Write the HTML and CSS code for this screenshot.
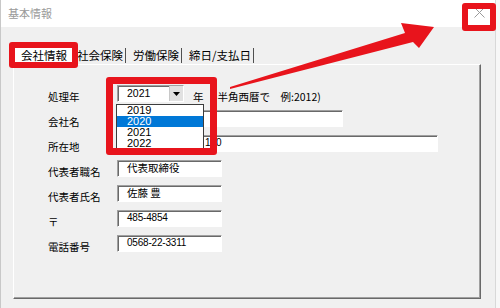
FILE: index.html
```html
<!DOCTYPE html>
<html lang="ja">
<head>
<meta charset="utf-8">
<link rel="stylesheet" href="styles.css">
</head>
<body>
<div class="window">
  <div class="titlebar">
    <span class="title">基本情報</span>
    <span class="close">
      <svg width="11" height="11" viewBox="0 0 11 11"><path d="M0.5 0.5L10.5 10.5M10.5 0.5L0.5 10.5" stroke="#9a9a9a" stroke-width="1" fill="none"/></svg>
    </span>
  </div>
  <div class="client">
    <div class="tabs">
      <div class="tab active">会社情報</div>
      <div class="tab first">社会保険</div>
      <div class="tab">労働保険</div>
      <div class="tab">締日/支払日</div>
    </div>
    <div class="panel">
      <div class="form">
        <div class="label">処理年</div>
        <div class="yearrow">
          <div class="combo">
            <span class="combo-val">2021</span>
            <span class="combo-btn"><svg width="7" height="4" viewBox="0 0 7 4"><path d="M0 0H7L3.5 4Z" fill="#000"/></svg></span>
          </div>
          <span class="nen">年</span>
          <span class="hint">半角西暦で　例:2012)</span>
        </div>
        <div class="label">会社名</div>
        <div class="field w-mid"></div>
        <div class="label">所在地</div>
        <div class="field w-long addr">100</div>
        <div class="label">代表者職名</div>
        <div class="field w-short">代表取締役</div>
        <div class="label">代表者氏名</div>
        <div class="field w-short">佐藤 豊</div>
        <div class="label">〒</div>
        <div class="field w-short num">485-4854</div>
        <div class="label">電話番号</div>
        <div class="field w-short num">0568-22-3311</div>
      </div>
    </div>
  </div>

  <ul class="dropdown">
    <li>2019</li>
    <li class="sel">2020</li>
    <li>2021</li>
    <li>2022</li>
  </ul>

  <div class="mark mark-tab"></div>
  <div class="mark mark-combo"></div>
  <div class="mark mark-close"></div>

  <svg class="arrow" width="500" height="308" viewBox="0 0 500 308">
    <polygon points="230,87 405,33 401,23 434,27 419,48 413,42 230,89" fill="#e8141c"/>
  </svg>
</div>
</body>
</html>
```

FILE: styles.css
```css
* { box-sizing: border-box; }

body {
  margin: 0;
  width: 500px;
  height: 308px;
  overflow: hidden;
  background: #f7f7f7;
  font-family: "Noto Sans CJK JP", "Liberation Sans", sans-serif;
  color: #000;
}

.window {
  position: relative;
  width: 496px;
  height: 308px;
  background: #f0f0f0;
  border-left: 1px solid #c8c8c8;
  border-right: 1px solid #d8d8d8;
}

.titlebar {
  height: 27px;
  background: #fff;
  display: flex;
  align-items: center;
  justify-content: space-between;
  padding-left: 7px;
}

.title {
  font-size: 11px;
  color: #9a9a9a;
  line-height: 1;
}

.close {
  width: 32px;
  height: 27px;
  display: flex;
  align-items: center;
  justify-content: center;
  padding-bottom: 2px;
}

.client {
  padding-left: 12px;
  padding-top: 21px;
}

.tabs {
  display: flex;
  height: 16px;
  align-items: stretch;
}

.tab {
  font-size: 11.5px;
  line-height: 15px;
  height: 15px;
  padding: 0 2px 0 7px;
  border-right: 1px solid #505050;
  white-space: nowrap;
}

.tab.first { padding-left: 4px; }

.tab.active {
  margin-left: 2px;
  width: 58px;
  padding: 0 0 0 6px;
  background: #fff;
  border-right: none;
}

.panel {
  width: 468px;
  height: 235px;
  border-top: 1px solid #fff;
  border-left: 1px solid #fff;
  border-right: 1px solid #696969;
  border-bottom: 1px solid #696969;
  box-shadow: inset -1px -1px 0 #a0a0a0;
}

.form {
  display: grid;
  grid-template-columns: 69px auto;
  grid-auto-rows: 17px;
  row-gap: 8px;
  padding: 20px 0 0 34px;
  align-items: start;
}

.label {
  font-size: 10.5px;
  line-height: 17px;
  margin-top: 3px;
  white-space: nowrap;
}

.field, .combo {
  height: 17px;
  background: #fff;
  border-top: 1px solid #a0a0a0;
  border-left: 1px solid #a0a0a0;
  border-right: 1px solid #fff;
  border-bottom: 1px solid #fff;
  box-shadow: inset 1px 1px 0 #696969;
  font-size: 10.5px;
  line-height: 14px;
  padding-left: 9px;
  white-space: nowrap;
  overflow: hidden;
}

.field.num {
  font-family: "Liberation Sans", sans-serif;
  font-size: 10px;
  letter-spacing: -0.2px;
}

.field.addr {
  font-family: "Liberation Sans", sans-serif;
  font-size: 10px;
  padding-left: 87px;
}

.w-short { width: 105px; }
.w-mid { width: 226px; }
.w-long { width: 321px; }

.yearrow {
  display: flex;
  align-items: start;
}

.combo {
  width: 67px;
  display: flex;
  justify-content: space-between;
  padding-left: 9px;
  font-family: "Liberation Sans", sans-serif;
  font-size: 10.5px;
}

.combo-btn {
  width: 14px;
  height: 15px;
  background: #e1e1e1;
  border-left: 1px solid #c8c8c8;
  display: flex;
  align-items: center;
  justify-content: center;
}

.nen, .hint {
  font-size: 10.5px;
  line-height: 17px;
  margin-top: 3px;
  white-space: nowrap;
}

.nen { margin-left: 9px; }
.hint { margin-left: 14px; }

.dropdown {
  position: absolute;
  left: 115px;
  top: 104px;
  width: 88px;
  margin: 0;
  padding: 0;
  list-style: none;
  background: #fff;
  border: 1px solid #3c3c3c;
  font-family: "Liberation Sans", sans-serif;
  font-size: 11px;
}

.dropdown li {
  height: 11px;
  line-height: 11px;
  padding-left: 10px;
}

.dropdown li.sel {
  background: #0078d7;
  color: #fff;
}

.mark {
  position: absolute;
  border: 6px solid #e8141c;
  border-radius: 3px;
}

.mark-tab { left: 8px; top: 42px; width: 69px; height: 26px; }
.mark-combo { left: 105px; top: 77px; width: 111px; height: 78px; border-width: 7px; }
.mark-close { left: 461px; top: 3px; width: 34px; height: 28px; }

.arrow {
  position: absolute;
  left: -1px;
  top: 0;
}
```
